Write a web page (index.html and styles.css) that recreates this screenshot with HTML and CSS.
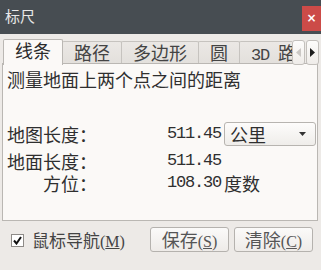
FILE: index.html
```html
<!DOCTYPE html>
<html lang="zh-CN">
<head>
  <meta charset="UTF-8">
  <title>标尺</title>
  <link rel="stylesheet" href="styles.css">
</head>
<body>
  <div class="window">
    <div class="titlebar">
      <span class="title">标尺</span>
      <span class="close">×</span>
    </div>

    <div class="tabbar">
      <div class="tabs">
        <div class="tab active">线条</div>
        <div class="tab">路径</div>
        <div class="tab">多边形</div>
        <div class="tab">圆</div>
        <div class="tab"><span class="latin">3D </span>路径</div>
      </div>
      <div class="scroll disabled">
        <svg width="5" height="9" viewBox="0 0 5 9"><path d="M5 0 L0 4.5 L5 9 Z" fill="#cbc8c5"/></svg>
      </div>
      <div class="scroll">
        <svg width="5" height="9" viewBox="0 0 5 9"><path d="M0 0 L5 4.5 L0 9 Z" fill="#1e1e1e"/></svg>
      </div>
    </div>

    <div class="panel">
      <p class="desc">测量地面上两个点之间的距离</p>
      <div class="measure">
        <span class="label">地图长度：</span>
        <span class="num">511.45</span>
        <div class="select">
          <span>公里</span>
          <svg width="7" height="4" viewBox="0 0 7 4"><path d="M0 0 L7 0 L3.5 4 Z" fill="#333"/></svg>
        </div>

        <span class="label low">地面长度：</span>
        <span class="num low">511.45</span>
        <span class="low"></span>

        <span class="label">方位：</span>
        <span class="num">108.30</span>
        <span class="unit">度数</span>
      </div>
    </div>

    <div class="footer">
      <span class="check">
        <svg width="9" height="9" viewBox="0 0 9 9"><path d="M1 4.5 L3.5 7.5 L8 1" stroke="#111" stroke-width="2" fill="none"/></svg>
      </span>
      <span class="check-label">鼠标导航<span class="key">(<u>M</u>)</span></span>
      <div class="buttons">
        <button class="btn">保存<span class="key">(<u>S</u>)</span></button>
        <button class="btn">清除<span class="key">(<u>C</u>)</span></button>
      </div>
    </div>
  </div>
</body>
</html>
```

FILE: styles.css
```css
body {
  margin: 0;
  background: #edeae7;
  font-family: "Noto Sans CJK SC", sans-serif;
  color: #2f2f2f;
}
.window {
  width: 321px;
  height: 270px;
  overflow: hidden;
}
.titlebar {
  height: 34px;
  background: #474d52;
  display: flex;
  justify-content: space-between;
  align-items: flex-start;
}
.title {
  margin: 6px 0 0 5px;
  font-size: 15px;
  line-height: 20px;
  color: #e8e8e8;
}
.close {
  margin-top: 6px;
  width: 19px;
  height: 25px;
  background: #cc4b48;
  color: #fff;
  font-family: "DejaVu Sans", sans-serif;
  font-weight: bold;
  font-size: 12px;
  line-height: 25px;
  text-align: center;
}
.tabbar {
  margin-top: 5px;
  height: 26px;
  padding-left: 3px;
  display: flex;
  align-items: flex-start;
  position: relative;
  z-index: 1;
}
.tabs {
  flex: 1;
  display: flex;
  overflow: hidden;
  height: 26px;
}
.tab {
  flex: none;
  margin-top: 2px;
  margin-right: -1px;
  height: 22px;
  box-sizing: border-box;
  padding: 0 11px;
  border: 1px solid #c6c3bf;
  border-bottom: none;
  border-radius: 2px 2px 0 0;
  background: linear-gradient(#ebe8e5, #e3e0dc);
  font-size: 18px;
  line-height: 21px;
  color: #444;
  white-space: nowrap;
}
.tab.active {
  margin-top: 0;
  height: 26px;
  background: #fbf9f7;
  border-color: #bab7b3;
  color: #2b2b2b;
  position: relative;
  z-index: 2;
}
.latin {
  font-family: "Liberation Mono", monospace;
  font-size: 17px;
  letter-spacing: -1.2px;
}
.scroll {
  width: 13px;
  height: 25px;
  margin-top: 1px;
  margin-right: 1px;
  box-sizing: border-box;
  border: 1px solid #c3c0bc;
  border-radius: 3px;
  background: linear-gradient(#fdfcfb, #efece9);
  display: flex;
  align-items: center;
  justify-content: center;
}
.scroll:last-child {
  margin-right: 2px;
}
.panel {
  margin: -2px 3px 0 2px;
  height: 158px;
  box-sizing: border-box;
  border: 1px solid #bab7b3;
  background: #fbf9f7;
  padding: 4px 0 0 4px;
}
.desc {
  margin: 0;
  font-size: 18px;
  line-height: 22px;
}
.measure {
  margin-top: 32px;
  display: grid;
  grid-template-columns: 160px 57px auto;
  grid-template-rows: 24px 26px 22px;
  align-items: center;
  font-size: 18px;
  line-height: 22px;
}
.measure .low {
  align-self: end;
}
.label {
  width: 90px;
  text-align: right;
}
.num {
  font-family: "Liberation Mono", monospace;
  font-size: 17px;
  letter-spacing: -1.2px;
}
.select {
  width: 92px;
  height: 24px;
  box-sizing: border-box;
  border: 1px solid #b7b4b0;
  border-radius: 3px;
  background: linear-gradient(#fdfcfb, #efedea);
  padding: 0 9px 0 5px;
  display: flex;
  align-items: center;
  justify-content: space-between;
}
.footer {
  margin-top: 6px;
  height: 25px;
  padding: 0 8px 0 11px;
  display: flex;
  align-items: center;
}
.check {
  width: 13px;
  height: 13px;
  margin-top: 2px;
  box-sizing: border-box;
  border: 1px solid #8e8b88;
  background: #fff;
  display: flex;
  align-items: center;
  justify-content: center;
}
.check-label {
  margin: 2px 0 0 8px;
  font-size: 17px;
  line-height: 22px;
  color: #444;
}
.key {
  font-family: "Liberation Serif", serif;
  font-size: 16px;
}
.buttons {
  margin-left: auto;
  display: flex;
  gap: 5px;
}
.btn {
  width: 79px;
  height: 25px;
  padding: 0;
  border: 1px solid #b5b2ae;
  border-radius: 3px;
  background: linear-gradient(#fbfaf9, #eeebe8);
  font-family: "Noto Sans CJK SC", sans-serif;
  font-size: 18px;
  line-height: 22px;
  color: #555;
}
```
